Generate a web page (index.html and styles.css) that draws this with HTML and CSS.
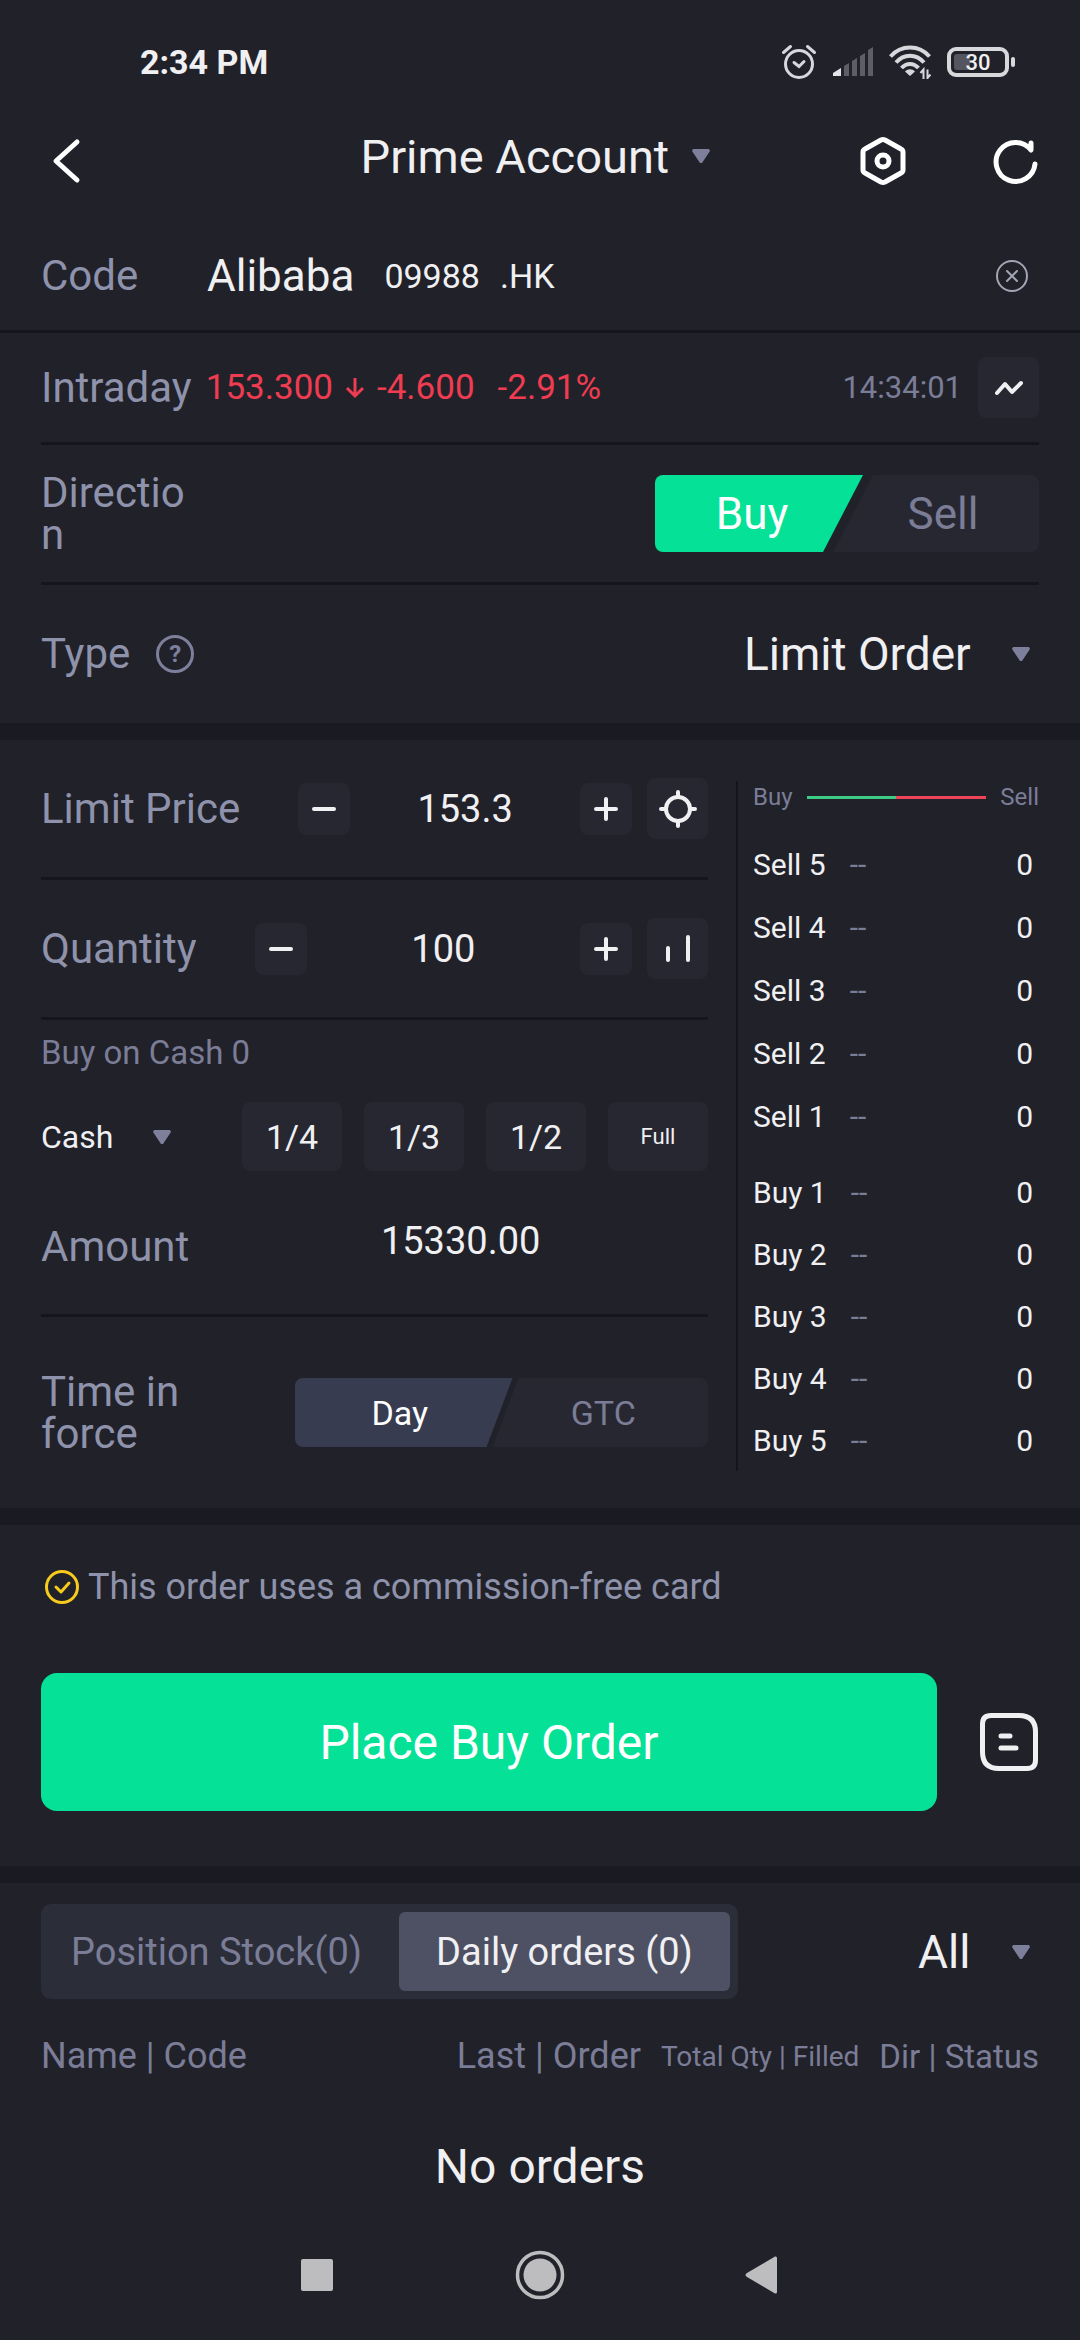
FILE: index.html
```html
<!DOCTYPE html>
<html lang="en">
<head>
  <meta charset="UTF-8">
  <meta name="viewport" content="width=device-width, initial-scale=1.0">
  <title>Prime Account - Trade</title>
  <link rel="stylesheet" href="styles.css">
</head>
<body>
  <div class="statusbar">
    <span class="clock">2:34 PM</span>
    <div class="status-icons">
      <svg width="36" height="36" viewBox="0 0 36 36" fill="none" stroke="#d8d8dc" stroke-width="3" stroke-linecap="round">
        <circle cx="18" cy="20" r="13.5"/><path d="M2.5 8.5 9.5 2.5M33.5 8.5 26.5 2.5"/><path d="M13 18.5 18 22.5 23 17.5"/>
      </svg>
      <svg width="40" height="30" viewBox="0 0 40 30">
        <path fill="#e4e4e8" d="M0 29V26L8 21V29z"/>
        <path fill="#5e5e68" d="M11 29V19l5-3v13zM19 29V14l5-3v18zM27 29V9l5-3v23zM35 29V3l5-3v29z"/>
      </svg>
      <svg width="42" height="34" viewBox="0 0 42 34" fill="none" stroke="#d8d8dc" stroke-width="4">
        <path d="M1.5 11.5C12-.5 30-.5 40.5 11.5M7 17.5c8-9 20-9 28 0M12.5 23c5-5.5 12-5.5 17 0"/>
        <path fill="#d8d8dc" stroke="none" d="M16 26.5c3-3 7-3 10 0L21 31z"/>
        <path stroke-width="2" d="M34.5 34V24.5L31.5 28M38.5 24.5V33l3-3.5"/>
      </svg>
      <div class="battery"><span class="battery-level"></span><b>30</b></div>
    </div>
  </div>

  <header class="topbar">
    <button class="icon-btn" aria-label="Back">
      <svg width="50" height="50" viewBox="0 0 50 50" fill="none" stroke="#fff" stroke-width="5" stroke-linecap="round" stroke-linejoin="round"><path d="M35 6 14 25 35 44"/></svg>
    </button>
    <div class="dropdown account">
      <select aria-label="Account"><option>Prime Account</option></select>
      <svg class="caret" viewBox="0 0 18 14"><path d="M1 0h16l1 2-8 12H8L0 2z"/></svg>
    </div>
    <div class="topbar-actions">
      <button class="icon-btn" aria-label="Settings">
        <svg width="50" height="50" viewBox="0 0 50 50" fill="none" stroke="#fff" stroke-width="5" stroke-linejoin="round"><path d="M23 4Q25 3 27 4L43 13Q45 14 45 16V34Q45 36 43 37L27 46Q25 47 23 46L7 37Q5 36 5 34V16Q5 14 7 13z"/><circle cx="25" cy="25" r="6"/></svg>
      </button>
      <button class="icon-btn" aria-label="Refresh">
        <svg width="50" height="50" viewBox="0 0 50 50" fill="none" stroke="#fff" stroke-width="5" stroke-linecap="round" stroke-linejoin="round"><path d="M45 28A19.5 19.5 0 1 1 41 14V7"/></svg>
      </button>
    </div>
  </header>

  <main>
    <section>
      <div class="row code-row">
        <span class="label">Code</span>
        <span class="stock-name">Alibaba</span>
        <span class="stock-code">09988</span>
        <span class="stock-market">.HK</span>
        <button class="icon-btn push" aria-label="Clear code">
          <svg width="34" height="34" viewBox="0 0 34 34" fill="none" stroke="#a3a5b5" stroke-width="2" stroke-linecap="round"><circle cx="17" cy="17" r="15"/><path d="M12 12 22 22M22 12 12 22"/></svg>
        </button>
      </div>
      <div class="row intraday-row">
        <span class="label">Intraday</span>
        <div class="quote">
          <span>153.300</span>
          <svg width="22" height="24" viewBox="0 0 22 24" fill="none" stroke="currentColor" stroke-width="3"><path d="M11 2V20M3 12 11 20 19 12"/></svg>
          <span>-4.600</span>
          <span class="percent">-2.91%</span>
        </div>
        <span class="time push">14:34:01</span>
        <button class="square-btn large" aria-label="Chart">
          <svg width="30" height="20" viewBox="0 0 30 20" fill="none" stroke="#f0f0f2" stroke-width="4" stroke-linecap="round" stroke-linejoin="round"><path d="M3 15 11 6 18 14 27 5"/></svg>
        </button>
      </div>
      <div class="row direction-row">
        <span class="label narrow">Direction</span>
        <div class="toggle direction push">
          <button class="first active">Buy</button>
          <button class="second">Sell</button>
        </div>
      </div>
      <div class="row type-row">
        <label class="label" for="type">Type</label>
        <button class="help" aria-label="About order types">?</button>
        <div class="dropdown push">
          <select id="type"><option>Limit Order</option></select>
          <svg class="caret" viewBox="0 0 18 14"><path d="M1 0h16l1 2-8 12H8L0 2z"/></svg>
        </div>
      </div>
    </section>

    <section class="trade">
      <div class="form">
        <div class="form-row">
          <label class="label" for="price">Limit Price</label>
          <div class="stepper">
            <button class="square-btn" aria-label="Lower price"><svg width="24" height="24" viewBox="0 0 24 24"><path d="M2 12H22"/></svg></button>
            <input id="price" type="text" value="153.3">
            <button class="square-btn" aria-label="Raise price"><svg width="24" height="24" viewBox="0 0 24 24"><path d="M2 12H22M12 2V22"/></svg></button>
          </div>
          <button class="square-btn large" aria-label="Follow price">
            <svg width="38" height="38" viewBox="0 0 38 38"><circle cx="19" cy="19" r="12"/><path d="M19 2V7M19 31V36M2 19H7M31 19H36"/></svg>
          </button>
        </div>
        <div class="form-row">
          <label class="label" for="qty">Quantity</label>
          <div class="stepper">
            <button class="square-btn" aria-label="Lower quantity"><svg width="24" height="24" viewBox="0 0 24 24"><path d="M2 12H22"/></svg></button>
            <input id="qty" type="text" value="100">
            <button class="square-btn" aria-label="Raise quantity"><svg width="24" height="24" viewBox="0 0 24 24"><path d="M2 12H22M12 2V22"/></svg></button>
          </div>
          <button class="square-btn large" aria-label="Quantity presets">
            <svg width="38" height="38" viewBox="0 0 38 38"><path d="M9 18V30M29 7V30"/></svg>
          </button>
        </div>
        <p class="hint">Buy on Cash 0</p>
        <div class="fractions">
          <div class="dropdown small">
            <select aria-label="Funding"><option>Cash</option></select>
            <svg class="caret" viewBox="0 0 18 14"><path d="M1 0h16l1 2-8 12H8L0 2z"/></svg>
          </div>
          <button>1/4</button>
          <button>1/3</button>
          <button>1/2</button>
          <button class="full">Full</button>
        </div>
        <div class="form-row amount-row">
          <span class="label">Amount</span>
          <output>15330.00</output>
        </div>
        <div class="form-row force-row">
          <span class="label narrow">Time in force</span>
          <div class="toggle force">
            <button class="first active">Day</button>
            <button class="second">GTC</button>
          </div>
        </div>
      </div>

      <div class="book">
        <div class="ratio"><span>Buy</span><i class="bar"></i><span>Sell</span></div>
        <table class="sells">
          <tr><th>Sell 5<span>--</span></th><td>0</td></tr>
          <tr><th>Sell 4<span>--</span></th><td>0</td></tr>
          <tr><th>Sell 3<span>--</span></th><td>0</td></tr>
          <tr><th>Sell 2<span>--</span></th><td>0</td></tr>
          <tr><th>Sell 1<span>--</span></th><td>0</td></tr>
        </table>
        <table class="buys">
          <tr><th>Buy 1<span>--</span></th><td>0</td></tr>
          <tr><th>Buy 2<span>--</span></th><td>0</td></tr>
          <tr><th>Buy 3<span>--</span></th><td>0</td></tr>
          <tr><th>Buy 4<span>--</span></th><td>0</td></tr>
          <tr><th>Buy 5<span>--</span></th><td>0</td></tr>
        </table>
      </div>
    </section>

    <section class="submit">
      <p class="card-note">
        <svg width="36" height="36" viewBox="0 0 36 36" fill="none" stroke="#f6cb1c" stroke-width="3" stroke-linecap="round" stroke-linejoin="round"><circle cx="18" cy="18" r="15.5"/><path d="M12 18 17 23 25 14"/></svg>
        This order uses a commission-free card
      </p>
      <div class="submit-row">
        <button class="place-order">Place Buy Order</button>
        <button class="icon-btn" aria-label="Order notes">
          <svg width="60" height="60" viewBox="0 0 60 60" fill="none" stroke="#f0f0f2" stroke-width="5"><path d="M12 3.5H40Q56.5 3.5 56.5 20V48Q56.5 56.5 48 56.5H20Q3.5 56.5 3.5 40V12Q3.5 3.5 12 3.5z"/><path stroke-linecap="round" d="M22 24H31M22 36H37"/></svg>
        </button>
      </div>
    </section>

    <section class="orders">
      <div class="tabs-row">
        <div class="tabs">
          <button>Position Stock(0)</button>
          <button class="active">Daily orders (0)</button>
        </div>
        <div class="dropdown">
          <select aria-label="Filter"><option>All</option></select>
          <svg class="caret" viewBox="0 0 18 14"><path d="M1 0h16l1 2-8 12H8L0 2z"/></svg>
        </div>
      </div>
      <table class="orders-table">
        <thead>
          <tr><th>Name | Code</th><th class="last">Last | Order</th><th class="total">Total Qty | Filled</th><th class="dir">Dir | Status</th></tr>
        </thead>
        <tbody>
          <tr><td colspan="4">No orders</td></tr>
        </tbody>
      </table>
    </section>
  </main>

  <nav class="navbar">
    <button class="icon-btn" aria-label="Recent apps"><svg width="50" height="50" viewBox="0 0 50 50"><rect x="9" y="9" width="32" height="32" rx="2"/></svg></button>
    <button class="icon-btn" aria-label="Home"><svg width="50" height="50" viewBox="0 0 50 50"><circle cx="25" cy="25" r="16.5"/><circle cx="25" cy="25" r="22.5" fill="none" stroke="#bdbdbf" stroke-width="3.5"/></svg></button>
    <button class="icon-btn" aria-label="Go back"><svg width="50" height="50" viewBox="0 0 50 50"><path d="M37 6.5Q39 6 39 8V42Q39 44 37 43.5L9 27Q6 25 9 23z"/></svg></button>
  </nav>
</body>
</html>
```
FILE: styles.css
```css
* { margin:0; padding:0; box-sizing:border-box; }
body { font-family: Roboto, sans-serif; background-color:#21212a; color:#f0f0f2; min-height:100vh; display:flex; flex-direction:column; }
button, input, select { font-family:inherit; font-size:inherit; color:inherit; background:transparent; border:none; }
button { cursor:pointer; }
svg { display:block; flex:none; }
main { flex:1; }
.push { margin-left:auto; }
.icon-btn { flex:none; }

/* Status bar */
.statusbar { display:flex; justify-content:space-between; align-items:center; height:124px; padding:0 65px 0 140px; }
.clock { font-size:34px; font-weight:700; }
.status-icons { display:flex; align-items:center; gap:16px; }
.battery { position:relative; width:62px; height:30px; border:4px solid #d8d8dc; border-radius:9px; display:flex; align-items:center; justify-content:center; margin-right:6px; }
.battery::after { content:""; position:absolute; right:-10px; top:6px; width:4px; height:10px; border-radius:2px; background:#d8d8dc; }
.battery-level { position:absolute; left:3px; top:3px; width:16px; height:16px; border-radius:3px; background:#55555f; }
.battery b { position:relative; font-size:22px; font-weight:500; }

/* Top bar */
.topbar { display:grid; grid-template-columns:1fr auto 1fr; align-items:center; height:74px; padding:0 40px 0 42px; }
.topbar-actions { display:flex; justify-content:flex-end; gap:82px; }

/* Drop-downs */
.dropdown { display:flex; align-items:center; gap:41px; padding-right:9px; }
.dropdown select { appearance:none; font-size:46px; }
.dropdown.account { gap:22px; padding:0 12px 10px 0; }
.dropdown.account select { font-size:47px; }
.dropdown.small { gap:39px; padding-right:0; margin-right:auto; }
.dropdown.small select { font-size:32px; }
.caret { width:18px; height:14px; fill:#7d7f9b; }

/* Stock rows */
section { border-bottom:17px solid #1a1a22; }
section:last-child { border-bottom:none; }
.row { display:flex; align-items:center; margin:0 41px; border-bottom:3px solid #15151c; }
.label { font-size:42px; line-height:42px; color:#8e92ab; }
.narrow { width:156px; overflow-wrap:anywhere; }
.code-row { height:135px; margin:0; padding:24px 51px 0 41px; }
.code-row .label { width:166px; }
.stock-name { font-size:44px; margin-right:30px; }
.stock-code { font-size:34px; margin-right:20px; }
.stock-market { font-size:34px; }
.intraday-row { height:112px; }
.quote { display:flex; align-items:center; gap:11px; margin-left:14px; font-size:35px; color:#ef3c51; }
.percent { margin-left:12px; }
.time { font-size:31px; color:#7b7d97; margin-right:16px; }
.direction-row { height:140px; }
.type-row { height:138px; border-bottom:none; }
.help { width:38px; height:38px; margin-left:26px; border:3px solid #7d7f9b; border-radius:50%; color:#7d7f9b; font-size:24px; font-weight:700; line-height:30px; }

.square-btn { display:flex; align-items:center; justify-content:center; flex:none; width:52px; height:52px; border-radius:8px; background:#272731; }
.square-btn.large { width:61px; height:61px; }

/* Slanted two-way toggles */
.toggle { display:flex; }
.toggle button { color:#7b7d97; background:#272731; }
.toggle .first { border-radius:8px 0 0 8px; }
.toggle .second { border-radius:0 8px 8px 0; }
.toggle .active { color:#fff; }
.direction { width:384px; height:77px; font-size:44px; }
.direction .first { width:208px; padding-right:14px; clip-path:polygon(0 0, 100% 0, calc(100% - 40px) 100%, 0 100%); }
.direction .second { flex:1; margin-left:-30px; padding-left:14px; clip-path:polygon(40px 0, 100% 0, 100% 100%, 0 100%); }
.direction .active { background:#05e197; }
.force { flex:1; height:69px; font-size:34px; }
.force .first { flex:1; padding-right:8px; clip-path:polygon(0 0, 100% 0, calc(100% - 26px) 100%, 0 100%); }
.force .second { flex:1; margin-left:-20px; padding-left:6px; clip-path:polygon(26px 0, 100% 0, 100% 100%, 0 100%); }
.force .active { background:#383c50; }

/* Order form */
.trade { display:grid; grid-template-columns:minmax(0, 667fr) minmax(0, 303fr); gap:28px; padding:0 41px; }
.form-row { display:flex; align-items:center; height:140px; border-bottom:3px solid #15151c; }
.form .square-btn svg { fill:none; stroke:#f0f0f2; stroke-width:4; stroke-linecap:round; }
.stepper { flex:1; display:flex; align-items:center; justify-content:space-between; margin:0 15px 0 58px; }
.stepper input { flex:1; width:100%; min-width:0; text-align:center; font-size:38px; }
.hint { font-size:33px; line-height:66px; color:#7b7d97; }
.fractions { display:flex; gap:22px; padding-top:16px; }
.fractions button { width:100px; height:69px; border-radius:8px; background:#272731; font-size:34px; }
.fractions button.full { font-size:22px; }
.amount-row { height:146px; padding-top:8px; }
.amount-row output { flex:1; padding:0 0 12px 24px; text-align:center; font-size:38px; }
.force-row { height:191px; border-bottom:none; }
.force-row .narrow { width:254px; padding-right:100px; }

/* Order book */
.book { margin:41px 0 37px; padding-left:15px; border-left:2px solid #15151c; }
.ratio { display:flex; align-items:center; gap:14px; height:32px; font-size:24px; color:#7b7d97; }
.bar { flex:1; height:3px; background:linear-gradient(to right, #3ecb86 50%, #ef4458 50%); }
.book table { width:100%; border-collapse:collapse; font-size:30px; }
.book tr { height:63px; }
.book .buys tr { height:62px; }
.book th { font-weight:400; text-align:left; }
.book th span { margin-left:24px; color:#7b7d97; }
.book td { text-align:right; padding-right:6px; }
.book .sells { margin:20px 0 13px; }

/* Commission card and submit */
.submit { padding:0 41px 55px; }
.card-note { display:flex; align-items:center; gap:8px; padding:0 3px; height:124px; font-size:36px; color:#8e92ab; }
.submit-row { display:flex; align-items:center; gap:42px; padding-top:24px; }
.place-order { flex:1; height:138px; border-radius:16px; background:#05e197; color:#fff; font-size:48px; }

/* Orders */
.orders { padding:21px 41px 0; }
.tabs-row { display:flex; justify-content:space-between; align-items:center; }
.tabs { display:flex; padding:8px; border-radius:10px; background:#2b2d39; font-size:38px; color:#7b7d97; }
.tabs button { height:79px; padding:0 37px; border-radius:6px; }
.tabs button:first-child { padding:0 37px 0 22px; }
.tabs .active { background:#4e5064; color:#f0f0f2; }
.orders-table { width:100%; border-collapse:collapse; }
.orders-table th { height:114px; font-size:36px; font-weight:400; text-align:left; color:#7b7d97; white-space:nowrap; }
.orders-table .last, .orders-table .total, .orders-table .dir { width:1px; padding-left:20px; text-align:right; }
.orders-table .total { font-size:28px; }
.orders-table .dir { font-size:33px; }
.orders-table td { height:106px; text-align:center; font-size:48px; }

/* System navigation */
.navbar { display:flex; justify-content:center; gap:173px; padding:0 0 40px; }
.navbar svg { fill:#bdbdbf; }
```
